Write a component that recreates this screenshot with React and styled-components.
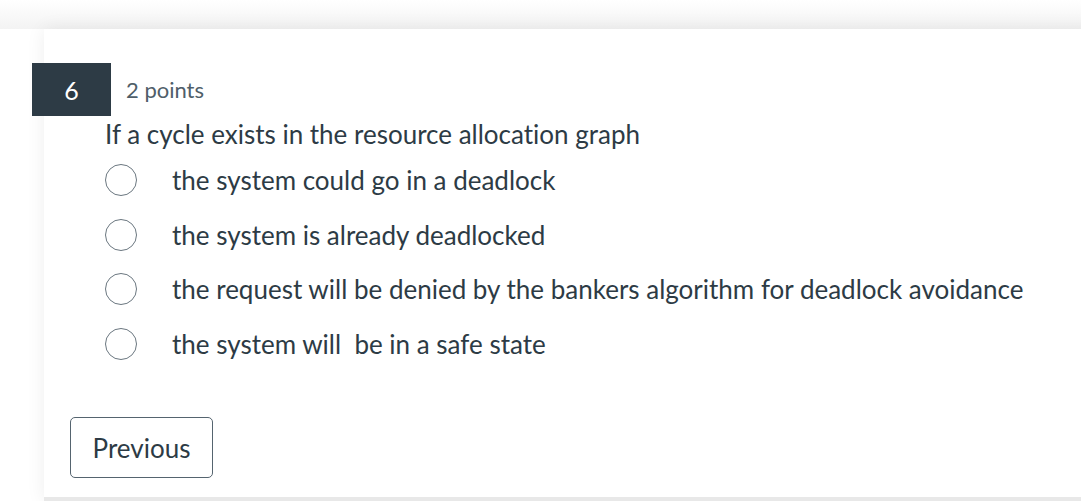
import React from "react";
import styled, { createGlobalStyle } from "styled-components";

const Global = createGlobalStyle`
  html, body { margin: 0; padding: 0; background: #ffffff; }
  body {
    font-family: Lato, "Open Sans", sans-serif;
    font-variant-ligatures: none;
    overflow: hidden;
  }
`;

const Page = styled.div`
  width: 1081px;
  height: 501px;
  overflow: hidden;
  padding: 29px 0 0 44px;
  box-sizing: border-box;
  background: linear-gradient(#ffffff, #f3f3f3 29px, #ffffff 29px);
`;

const Card = styled.div`
  width: 1100px;
  height: 472px;
  background: #ffffff;
  box-shadow: 0 0 18px rgba(0, 0, 0, 0.07);
  border-bottom: 4px solid #e8e8e8;
  box-sizing: border-box;
  padding-top: 34px;
`;

const Header = styled.div`
  display: flex;
  align-items: center;
  margin-left: -12px;
`;

const Badge = styled.div`
  width: 79px;
  height: 53px;
  background: #2d3b45;
  color: #ffffff;
  font-size: 25px;
  display: flex;
  align-items: center;
  justify-content: center;
`;

const Points = styled.div`
  margin-left: 15px;
  font-size: 22px;
  color: #4f5e69;
`;

const Body = styled.div`
  padding-left: 61px;
  color: #2d3b45;
`;

const Question = styled.div`
  font-size: 26px;
  line-height: 36px;
`;

const Options = styled.div`
  display: flex;
  flex-direction: column;
  margin-top: 1px;
`;

const Option = styled.label`
  display: flex;
  align-items: center;
  height: 54.5px;
  font-size: 26px;
`;

const Radio = styled.span`
  width: 30px;
  height: 30px;
  border: 1px solid #6b7780;
  border-radius: 50%;
  margin-right: 35px;
  flex-shrink: 0;
`;

const Footer = styled.div`
  padding: 46px 0 0 26px;
`;

const Button = styled.button`
  width: 143px;
  height: 61px;
  border: 1px solid #55646f;
  border-radius: 5px;
  background: #ffffff;
  color: #2d3b45;
  font-family: Lato, sans-serif;
  font-variant-ligatures: none;
  font-size: 26px;
  padding: 0;
  cursor: pointer;
`;

const options = [
  "the system could go in a deadlock",
  "the system is already deadlocked",
  "the request will be denied by the bankers algorithm for deadlock avoidance",
  "the system will\u00a0 be in a safe state",
];

export default function App() {
  return (
    <>
      <Global />
      <Page>
        <Card>
          <Header>
            <Badge>6</Badge>
            <Points>2 points</Points>
          </Header>
          <Body>
            <Question>If a cycle exists in the resource allocation graph</Question>
            <Options>
              {options.map((o) => (
                <Option key={o}>
                  <Radio />
                  {o}
                </Option>
              ))}
            </Options>
          </Body>
          <Footer>
            <Button>Previous</Button>
          </Footer>
        </Card>
      </Page>
    </>
  );
}
